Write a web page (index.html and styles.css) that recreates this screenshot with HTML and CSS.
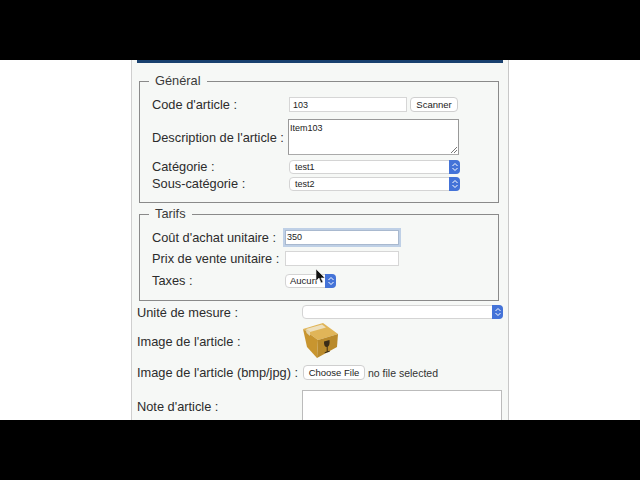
FILE: index.html
```html
<!DOCTYPE html>
<html lang="fr">

<head>
    <meta charset="UTF-8">
    <title>Article</title>
    <link rel="stylesheet" href="styles.css">
</head>

<body>
    <div class="screen">
        <div class="panel">
            <div class="topbar"></div>

            <fieldset class="group group-general">
                <legend>Général</legend>
                <div class="row row-code">
                    <label class="label">Code d'article :</label>
                    <div class="field-text code-input">103</div>
                    <div class="btn scan-btn">Scanner</div>
                </div>
                <div class="row row-desc">
                    <label class="label">Description de l'article :</label>
                    <div class="area desc-area">Item103
                        <svg class="grip" width="8" height="8" viewBox="0 0 8 8"><path d="M1 7L7 1M4 7L7 4" stroke="#777" fill="none"/></svg>
                    </div>
                </div>
                <div class="row row-cat">
                    <label class="label">Catégorie :</label>
                    <div class="select cat-select"><span class="select-text">test1</span><span class="arrows"><svg width="8" height="12" viewBox="0 0 8 12"><path d="M1.500 5L4 2.500L6.500 5M1.500 7L4 9.500L6.500 7" stroke="#fff" fill="none"/></svg></span></div>
                </div>
                <div class="row row-sub">
                    <label class="label">Sous-catégorie :</label>
                    <div class="select cat-select"><span class="select-text">test2</span><span class="arrows"><svg width="8" height="12" viewBox="0 0 8 12"><path d="M1.500 5L4 2.500L6.500 5M1.500 7L4 9.500L6.500 7" stroke="#fff" fill="none"/></svg></span></div>
                </div>
            </fieldset>

            <fieldset class="group group-tarifs">
                <legend>Tarifs</legend>
                <div class="row row-cost">
                    <label class="label label-tarif">Coût d'achat unitaire :</label>
                    <div class="field-text price-input focused">350</div>
                </div>
                <div class="row row-sale">
                    <label class="label label-tarif">Prix de vente unitaire :</label>
                    <div class="field-text price-input"></div>
                </div>
                <div class="row row-tax">
                    <label class="label label-tarif">Taxes :</label>
                    <div class="select tax-select"><span class="select-text tax-text">Aucun</span><span class="arrows"><svg width="8" height="12" viewBox="0 0 8 12"><path d="M1.500 5L4 2.500L6.500 5M1.500 7L4 9.500L6.500 7" stroke="#fff" fill="none"/></svg></span></div>
                </div>
            </fieldset>

            <div class="form-row row-unit">
                <label class="label label-wide">Unité de mesure :</label>
                <div class="select unit-select"><span class="select-text"></span><span class="arrows"><svg width="8" height="12" viewBox="0 0 8 12"><path d="M1.500 5L4 2.500L6.500 5M1.500 7L4 9.500L6.500 7" stroke="#fff" fill="none"/></svg></span></div>
            </div>
            <div class="form-row row-image">
                <label class="label label-wide">Image de l'article :</label>
                <svg class="box" width="38" height="38" viewBox="0 0 38 38">
                    <polygon points="1,7 21,1 36,12 16,18" fill="#e0b558"/>
                    <polygon points="1,7 16,18 15,36 5,25" fill="#c8952f"/>
                    <polygon points="16,18 36,12 35,25 15,36" fill="#b98a2c"/>
                    <polygon points="4,7 20,2.500 24,5.500 8,10" fill="#eee0bd"/>
                    <polygon points="4,7 8,10 8,14 4.500,11" fill="#e2d3ac"/>
                    <path d="M22 19.500l5.500-1.500c.5 3.500-.3 6-1.800 6.800v4.500l2-.6v1l-5 1.500v-1l2-.6v-4.500c-1.700 0-2.900-2-2.700-5.600z" fill="#3a2c18"/>
                </svg>
            </div>
            <div class="form-row row-file">
                <label class="label label-wide">Image de l'article (bmp/jpg) :</label>
                <div class="btn file-btn">Choose File</div>
                <span class="file-name">no file selected</span>
            </div>
            <div class="form-row row-note">
                <label class="label label-wide">Note d'article :</label>
                <div class="area note-area"></div>
            </div>
        </div>

        <!-- pointer from the recording -->
        <svg class="cursor" width="11" height="16" viewBox="0 0 11 16"><path d="M1 1v12l3-3 2 5 2-1-2-4h4z" fill="#111" stroke="#eee" stroke-width=".6"/></svg>
    </div>
</body>

</html>
```

FILE: styles.css
```css
html,
body {
    margin: 0;
    padding: 0;
    background-color: #000;
}

.screen {
    position: relative;
    width: 640px;
    height: 360px;
    margin-top: 60px;
    background-color: #fff;
    overflow: hidden;
    font-family: "Liberation Sans", Arial, sans-serif;
    color: #2c2c2c;
}

.panel {
    box-sizing: border-box;
    width: 378px;
    height: 360px;
    margin-left: 131px;
    padding: 0 5px 0 5px;
    background-color: #f6f8f6;
    border-left: 1px solid #cfcfcf;
    border-right: 1px solid #c8c8c8;
    font-size: 12.8px;
}

.topbar {
    height: 3px;
    background-color: #18406f;
}

.group {
    box-sizing: border-box;
    width: 360px;
    margin: 0 0 0 2px;
    padding: 0 12px;
    border: 1px solid #8a8a8a;
    min-inline-size: 0;
}

.group legend {
    margin-left: -3px;
    padding: 0 6px;
    font-size: 12.8px;
    line-height: 14px;
    color: #3a3a3a;
}

.group-general {
    height: 129px;
    margin-top: 11px;
}

.group-tarifs {
    height: 94px;
    margin-top: 4px;
}

.row,
.form-row {
    display: flex;
    align-items: center;
}

.label {
    flex: none;
    width: 137px;
}

.label-tarif {
    width: 133px;
}

.label-wide {
    width: 165px;
}

.field-text {
    box-sizing: border-box;
    background-color: #fff;
    border: 1px solid #d6d6d6;
    font-size: 9px;
    padding-left: 1px;
    color: #222;
}

.code-input {
    width: 118px;
    height: 15px;
    line-height: 14px;
    padding-left: 3px;
}

.btn {
    box-sizing: border-box;
    background-color: #fff;
    border: 1px solid #cfcfcf;
    border-radius: 4px;
    text-align: center;
    font-size: 9.5px;
    color: #222;
}

.scan-btn {
    width: 48px;
    height: 15px;
    line-height: 13px;
    margin-left: 3px;
}

.row-code {
    height: 15px;
    margin-top: 9px;
}

.row-desc {
    height: 36px;
    margin-top: 7px;
}

.row-cat {
    height: 15px;
    margin-top: 4px;
}

.row-sub {
    height: 15px;
    margin-top: 2px;
}

.area {
    position: relative;
    box-sizing: border-box;
    background-color: #fff;
    border: 1px solid #999;
    border-bottom-color: #aaa;
    font-size: 9px;
    line-height: 12px;
    padding: 2px 0 0 1px;
    color: #222;
}

.desc-area {
    width: 171px;
    height: 36px;
    margin-left: -1px;
}

.grip {
    position: absolute;
    right: 0;
    bottom: 0;
}

.select {
    box-sizing: border-box;
    display: flex;
    justify-content: space-between;
    background-color: #fff;
    border: 1px solid #d4d4d4;
    border-radius: 4px;
    height: 14px;
    font-size: 9px;
    color: #222;
}

.select-text {
    padding-left: 4px;
    line-height: 12px;
}

.cat-select .select-text {
    padding-left: 5px;
}

.arrows {
    display: flex;
    align-items: center;
    justify-content: center;
    width: 11px;
    margin: -1px -1px -1px 0;
    background-color: #4473d8;
    border-radius: 0 4px 4px 0;
}

.cat-select {
    width: 171px;
}

.price-input {
    width: 114px;
    height: 15px;
    line-height: 13px;
}

.focused {
    border: 1px solid #a9b9cf;
    box-shadow: 0 0 0 2px #bfd0e6;
    background-color: #fff;
}

.row-cost {
    height: 15px;
    margin-top: 9px;
}

.row-sale {
    height: 15px;
    margin-top: 6px;
}

.row-tax {
    height: 15px;
    margin-top: 7px;
}

.tax-select {
    width: 51px;
}

.tax-text {
    font-size: 9.5px;
}

.row-unit {
    height: 14px;
    margin-top: 4px;
}

.unit-select {
    width: 202px;
}

.row-image {
    height: 38px;
    margin-top: 3px;
}

.box {
    flex: none;
}

.row-file {
    height: 15px;
    margin-top: 5px;
}

.file-btn {
    flex: none;
    width: 62px;
    height: 15px;
    line-height: 13px;
    margin-left: 1px;
}

.file-name {
    margin-left: 3px;
    font-size: 10.5px;
    color: #333;
}

.row-note {
    align-items: flex-start;
    margin-top: 10px;
    height: 40px;
}

.row-note .label {
    margin-top: 9px;
}

.note-area {
    width: 200px;
    height: 40px;
    border: 1px solid #bbb;
}

.cursor {
    position: absolute;
    left: 315px;
    top: 208px;
}
```
